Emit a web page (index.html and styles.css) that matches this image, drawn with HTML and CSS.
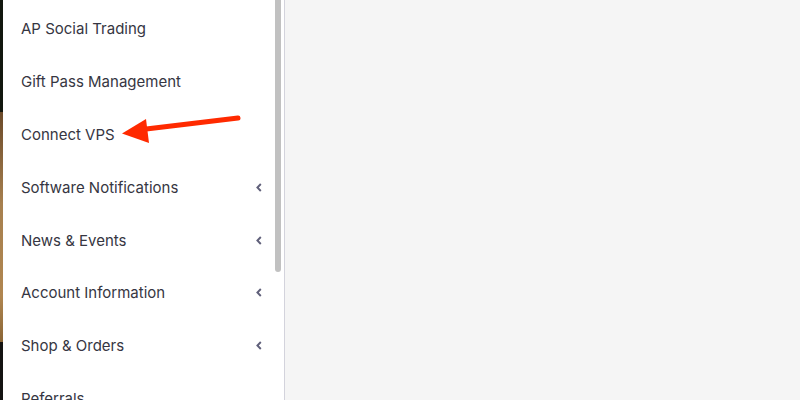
FILE: index.html
```html
<!DOCTYPE html>
<html lang="en">
<head>
<meta charset="utf-8">
<title>Menu</title>
<link rel="stylesheet" href="styles.css">
</head>
<body>
<div class="page">
  <div class="edge"><div class="e1"></div><div class="e2"></div><div class="e3"></div></div>
  <nav class="sidebar">
    <ul class="menu">
      <li class="item">AP Social Trading</li>
      <li class="item">Gift Pass Management</li>
      <li class="item">Connect VPS</li>
      <li class="item">Software Notifications<span class="chev"><svg width="6" height="9" viewBox="0 0 6 9"><path d="M4.8 1 L1.4 4.5 L4.8 8" fill="none" stroke="#60607a" stroke-width="1.9"/></svg></span></li>
      <li class="item">News &amp; Events<span class="chev"><svg width="6" height="9" viewBox="0 0 6 9"><path d="M4.8 1 L1.4 4.5 L4.8 8" fill="none" stroke="#60607a" stroke-width="1.9"/></svg></span></li>
      <li class="item">Account Information<span class="chev"><svg width="6" height="9" viewBox="0 0 6 9"><path d="M4.8 1 L1.4 4.5 L4.8 8" fill="none" stroke="#60607a" stroke-width="1.9"/></svg></span></li>
      <li class="item">Shop &amp; Orders<span class="chev"><svg width="6" height="9" viewBox="0 0 6 9"><path d="M4.8 1 L1.4 4.5 L4.8 8" fill="none" stroke="#60607a" stroke-width="1.9"/></svg></span></li>
      <li class="item">Referrals</li>
    </ul>
    <div class="scroll"><div class="thumb"></div></div>
    <svg class="arrow" width="130" height="40" viewBox="115 110 130 40">
      <line x1="238" y1="118" x2="142" y2="129.5" stroke="#ff2a00" stroke-width="5" stroke-linecap="round"/>
      <polygon points="122,133.5 146,119 149,143" fill="#ff2a00"/>
    </svg>
  </nav>
  <main class="content"></main>
</div>
</body>
</html>
```
FILE: styles.css
```css
html, body {
  margin: 0;
  padding: 0;
  height: 100%;
  overflow: hidden;
}
body {
  font-family: Inter, "Liberation Sans", sans-serif;
  background: #f5f5f5;
}
.page {
  display: flex;
  height: 400px;
  overflow: hidden;
}
.edge {
  width: 3px;
  display: flex;
  flex-direction: column;
}
.e1 { height: 112px; background: #12170f; }
.e2 { height: 230px; background: linear-gradient(#6b4a2a, #a7804f 40%, #b08650 80%, #8a6536); }
.e3 { flex: 1; background: #141312; }
.sidebar {
  position: relative;
  width: 281px;
  background: #fff;
  border-right: 1px solid #d3d3dc;
  display: flex;
  overflow: hidden;
}
.menu {
  list-style: none;
  margin: 0;
  padding: 0;
  flex: 1;
  margin-top: 2.5px;
}
.item {
  height: 52.8px;
  display: flex;
  align-items: center;
  justify-content: space-between;
  padding-left: 18px;
  padding-right: 11px;
  font-size: 15px;
  color: #363642;
}
.chev {
  display: flex;
  width: 6px;
  height: 9px;
}
.scroll {
  width: 10px;
  padding: 0 1px 0 0;
}
.thumb {
  margin-left: 2px;
  width: 6px;
  height: 272px;
  background: #c1c1c1;
  border-radius: 0 0 3px 3px;
}
.arrow {
  position: absolute;
  left: 112px;
  top: 110px;
}
.content {
  flex: 1;
  background: #f5f5f5;
}
```
